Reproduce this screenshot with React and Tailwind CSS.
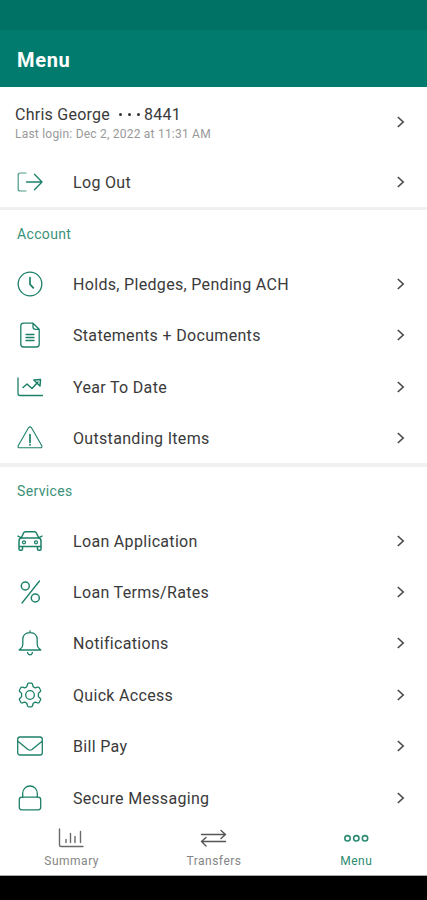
import React from "react";

function Icon({ children, className = "" }) {
  return (
    <svg
      viewBox="0 0 28 28"
      className={"h-7 w-7 shrink-0 " + className}
      fill="none"
      stroke="currentColor"
      strokeWidth="1.3"
      strokeLinecap="round"
      strokeLinejoin="round"
    >
      {children}
    </svg>
  );
}

const LogOut = () => (
  <Icon>
    <path d="M10 5H4.2Q2.200 5 2.200 7v14q0 2 2 2H10" strokeWidth="1.2" opacity="0.8" />
    <path d="M10.500 14H26M18.500 6.200l7.500 7.800-7.500 7.800" />
  </Icon>
);
const Clock = () => (
  <Icon>
    <circle cx="14" cy="14" r="11.800" />
    <path d="M14 7.500v6.800l3.300 3.500" strokeWidth="1.7" />
  </Icon>
);
const Doc = () => (
  <Icon>
    <path d="M17 2.200H7.500q-2.700 0-2.700 2.700v18.400q0 2.700 2.700 2.700h13q2.700 0 2.700-2.700V8.300zM17 2.200v3.700q0 2.400 2.400 2.400h3.800" />
    <path d="M10 13.500h8M10 16.500h8M10 19.500h8" />
  </Icon>
);
const Trend = () => (
  <Icon>
    <path d="M2 5v15.500Q2 22.500 4 22.500h22.500" />
    <path d="M7 14.500l4-3.500 5 4.500 6-6.500M17.800 7l6.700-.500-.500 6.500z" strokeWidth="1.5" />
  </Icon>
);
const Warning = () => (
  <Icon>
    <path d="M12.500 3.800q1.500-1.800 3 0l10.300 18q.700 2-1.500 2H3.700q-2.200 0-1.500-2z" strokeWidth="1.100" />
    <path d="M14 10.500v8M14 20.600v.300" strokeWidth="1.700" />
  </Icon>
);
const Car = () => (
  <Icon>
    <path d="M5.200 11l2.500-5.200Q8.200 4.700 9.200 4.700h9.600q1 0 1.500 1.100l2.500 5.200M2 9.200l3 1.500M26 9.200l-3 1.500M3 19.500V14q0-3 3-3h16q3 0 3 3v5.500zM3 19.500v2.700q0 1 1 1h1.500q1 0 1-1v-2.700M21.500 19.500v2.700q0 1 1 1H24q1 0 1-1v-2.700" strokeWidth="1.5" />
    <circle cx="8" cy="15.300" r="1.500" />
    <circle cx="20" cy="15.300" r="1.500" />
  </Icon>
);
const Percent = () => (
  <Icon>
    <path d="M23.500 3L6 25" />
    <circle cx="9.300" cy="8" r="4" strokeWidth="1.5" />
    <circle cx="19.300" cy="20" r="4" strokeWidth="1.5" />
  </Icon>
);
const Bell = () => (
  <Icon>
    <path d="M14 2v1.700M14 3.700C9 3.700 6.800 7 6.800 10.500v5c0 3.500-2 3.700-3.600 5.500h21.600c-1.600-1.800-3.600-2-3.600-5.500v-5C21.200 7 19 3.700 14 3.700zM11.500 23.500q.700 2.400 2.500 2.400t2.500-2.400" />
  </Icon>
);
const Gear = () => (
  <Icon>
    <path d="M11.500 3.200q.300-1 1.200-1h2.600q.900 0 1.200 1l.700 2.500 2 1.200 2.500-.700q1-.300 1.500.500l1.300 2.300q.500.800-.200 1.500l-1.900 1.900v3.200l1.900 1.900q.700.700.200 1.500l-1.300 2.300q-.500.800-1.500.500l-2.500-.700-2 1.200-.700 2.500q-.300 1-1.200 1h-2.600q-.900 0-1.200-1l-.700-2.500-2-1.200-2.500.700q-1 .300-1.500-.500L3.500 19q-.500-.800.200-1.500l1.900-1.900v-3.200l-1.900-1.900Q3 9.800 3.500 9l1.300-2.300q.500-.800 1.500-.500l2.500.700 2-1.200z" />
    <circle cx="14" cy="14" r="4.300" />
  </Icon>
);
const Mail = () => (
  <Icon>
    <rect x="1.700" y="5" width="24.600" height="18" rx="2.300" strokeWidth="1.300" />
    <path d="M2.200 9.500l9.800 8q2 1.300 4 0l9.800-8" />
  </Icon>
);
const Lock = () => (
  <Icon>
    <rect x="3.300" y="13.200" width="21.400" height="12.600" rx="2.500" />
    <path d="M6.700 13.200V9.300a7.300 7.300 0 0 1 14.600 0v3.900" />
  </Icon>
);

function Chevron() {
  return (
    <svg viewBox="0 0 12 14" className="h-[14px] w-3 shrink-0" fill="none" stroke="#484848" strokeWidth="1.600">
      <path d="M2.800 2L8.200 7 2.800 12" />
    </svg>
  );
}

function Row({ icon: I, label }) {
  return (
    <div className="flex h-[51.400px] shrink-0 items-center pl-[15.500px] pr-[20px] text-[#1c8069]">
      <I />
      <span className="ml-[29.500px] flex-1 whitespace-nowrap pt-[2px] text-[16px] leading-5 tracking-[0.320px] text-[#3a3a3a]">
        {label}
      </span>
      <Chevron />
    </div>
  );
}

function Section({ title, rows }) {
  return (
    <section className="-mt-[0.800px] shrink-0">
      <div className="h-[3.500px] bg-[#f0f0f0]" />
      <h2 className="flex h-[48.300px] items-center pl-[17px] pt-px text-[14px] font-normal tracking-[0.350px] text-[#3a9179]">
        {title}
      </h2>
      {rows.map(([icon, label]) => (
        <Row key={label} icon={icon} label={label} />
      ))}
    </section>
  );
}

const account = [
  [Clock, "Holds, Pledges, Pending ACH"],
  [Doc, "Statements + Documents"],
  [Trend, "Year To Date"],
  [Warning, "Outstanding Items"],
];
const services = [
  [Car, "Loan Application"],
  [Percent, "Loan Terms/Rates"],
  [Bell, "Notifications"],
  [Gear, "Quick Access"],
  [Mail, "Bill Pay"],
  [Lock, "Secure Messaging"],
];

function Tab({ label, className, children }) {
  return (
    <div className={"flex flex-1 flex-col items-center " + className}>
      <svg viewBox="0 0 28 24" className="h-6 w-7" fill="none" stroke="currentColor" strokeWidth="1.400" strokeLinecap="round" strokeLinejoin="round">
        {children}
      </svg>
      <span className="mt-[3px] pl-px text-[12px] leading-4 tracking-[0.500px]">{label}</span>
    </div>
  );
}

export default function App() {
  return (
    <div className="flex h-[900px] w-[427px] flex-col overflow-hidden bg-white font-[Roboto,sans-serif]">
      <div className="h-[30px] shrink-0 bg-[#007265]" />
      <header className="flex h-[57px] shrink-0 items-center bg-[#007b6e] pl-[17px] pt-[2px] text-[20px] font-bold tracking-[0.700px] text-white">
        Menu
      </header>
      <main className="flex h-[737px] shrink-0 flex-col overflow-hidden">
        <div className="flex h-[69px] shrink-0 items-center pl-[15px] pr-[20px]">
          <div className="flex-1 pt-[4px]">
            <div className="flex items-center text-[16px] leading-5 tracking-[0.250px] text-[#3a3a3a]">
              <span>Chris George</span>
              <span className="ml-[9px] mr-[4px] flex gap-[6px]">
                <i className="h-[3px] w-[3px] rounded-full bg-[#333]" />
                <i className="h-[3px] w-[3px] rounded-full bg-[#333]" />
                <i className="h-[3px] w-[3px] rounded-full bg-[#333]" />
              </span>
              <span>8441</span>
            </div>
            <div className="text-[12px] leading-[18px] tracking-[0.220px] text-[#999]">
              Last login: Dec 2, 2022 at 11:31 AM
            </div>
          </div>
          <Chevron />
        </div>
        <Row icon={LogOut} label="Log Out" />
        <Section title="Account" rows={account} />
        <Section title="Services" rows={services} />
      </main>
      <nav className="flex h-[52px] shrink-0 border-b border-[#aaa] pt-[2px]">
        <Tab label="Summary" className="text-[#858585]">
          <g stroke="#6a6a6a">
            <path d="M2.500 3v16q0 1.500 1.500 1.500h22" />
            <path d="M9 13.500v3M13.500 7.500v9M18 10.500v6M23.500 5.500v11" />
          </g>
        </Tab>
        <Tab label="Transfers" className="text-[#858585]">
          <g stroke="#555">
            <path d="M2.500 8.500h24M22 4.500l4.500 4-4.500 4M26.500 15.500h-24M7 11.500l-4.500 4 4.500 4.500" />
          </g>
        </Tab>
        <Tab label="Menu" className="text-[#2c8b72]">
          <g strokeWidth="1.600">
            <circle cx="5.500" cy="12.300" r="2.700" />
            <circle cx="14.300" cy="12.300" r="2.700" />
            <circle cx="23" cy="12.300" r="2.700" />
          </g>
        </Tab>
      </nav>
      <div className="h-6 shrink-0 bg-black" />
    </div>
  );
}
